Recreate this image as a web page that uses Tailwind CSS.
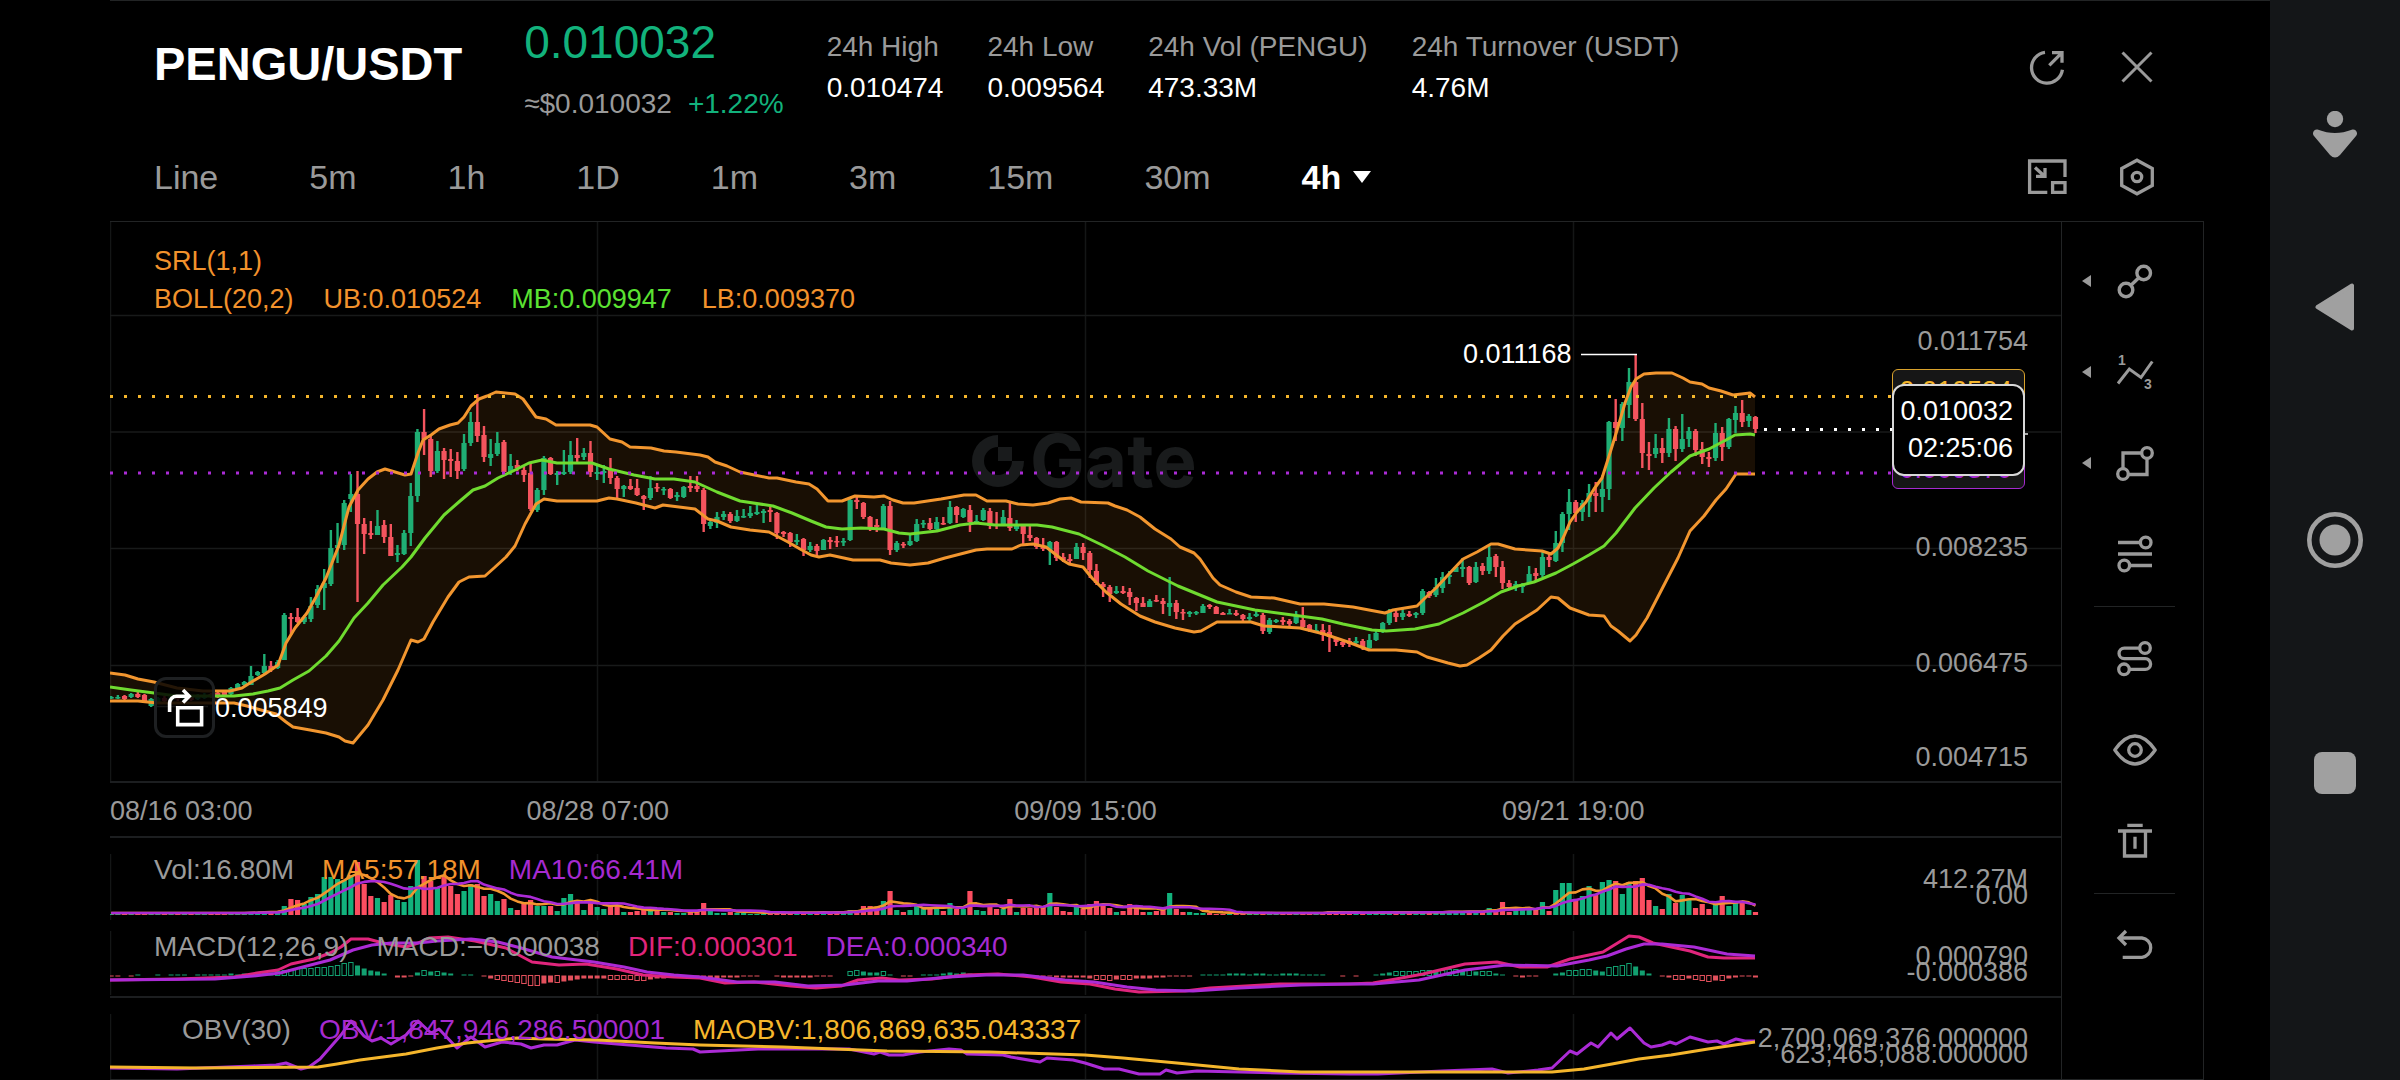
<!DOCTYPE html>
<html lang="en">
<head>
    <meta charset="UTF-8">
    <meta name="viewport" content="width=device-width, initial-scale=1.0">
    <title>PENGU/USDT</title>
    <script src="https://cdn.jsdelivr.net/npm/@tailwindcss/browser@4"></script>
</head>
<body class="flex min-h-screen bg-black pl-[110px] font-['Liberation_Sans',Arial,sans-serif] text-[#9a9a9a] antialiased">
    <div class="flex min-w-0 flex-1 flex-col border-t border-[#222425]">
        <!-- Ticker header -->
        <header class="flex h-[132px] items-center pr-[109px] pl-11">
            <h1 class="pb-1.5 text-[47px] font-bold text-white">PENGU/USDT</h1>
            <div class="ml-[62px]">
                <div class="text-[46px] leading-[74px] text-[#12b27c]">0.010032</div>
                <div class="flex gap-4 text-[28px] leading-[50px]">
                    <span>≈$0.010032</span>
                    <span class="text-[#12b27c]">+1.22%</span>
                </div>
            </div>
            <dl class="ml-[43px] flex gap-11 text-[28px] leading-[41px]">
                <div><dt>24h High</dt><dd class="text-white">0.010474</dd></div>
                <div><dt>24h Low</dt><dd class="text-white">0.009564</dd></div>
                <div><dt>24h Vol (PENGU)</dt><dd class="text-white">473.33M</dd></div>
                <div><dt>24h Turnover (USDT)</dt><dd class="text-white">4.76M</dd></div>
            </dl>
            <div class="ml-auto flex gap-[42px]">
                <button aria-label="Share">
                    <svg class="size-12" viewBox="0 0 48 48" fill="none" stroke="currentColor" stroke-width="3.3">
                        <path d="M22 9.3A15.5 15.5 0 1 0 39.4 26.8M26.3 22.4 38.5 10.2M29 9.7H39V19.7" />
                    </svg>
                </button>
                <button aria-label="Close">
                    <svg class="size-12" viewBox="0 0 48 48" fill="none" stroke="currentColor" stroke-width="3">
                        <path d="M9.5 9.5 38.5 38.5M38.5 9.5 9.5 38.5" />
                    </svg>
                </button>
            </div>
        </header>

        <!-- Interval tabs -->
        <nav class="flex h-[88px] items-center pr-[109px] pl-11">
            <div class="flex gap-[91px] text-[34px]">
                <button>Line</button>
                <button>5m</button>
                <button>1h</button>
                <button>1D</button>
                <button>1m</button>
                <button>3m</button>
                <button>15m</button>
                <button>30m</button>
                <button class="flex items-center gap-3 font-bold text-white">4h
                    <svg class="h-3 w-[18px]" viewBox="0 0 18 12" fill="currentColor"><path d="M0 0H18L9 12Z" /></svg>
                </button>
            </div>
            <div class="ml-auto flex gap-[42px]">
                <button aria-label="Picture in picture">
                    <svg class="size-12" viewBox="0 0 48 48" fill="none" stroke="currentColor" stroke-width="3.3">
                        <path d="M42 24V8H6.6V39.3H24.3M29.6 29.6H42V39.3H29.6ZM12 14.5 21 22.8M22 15V23.3H13" />
                    </svg>
                </button>
                <button aria-label="Chart settings">
                    <svg class="size-12" viewBox="0 0 48 48" fill="none" stroke="currentColor" stroke-width="3.3">
                        <path d="M24 7.2 39.3 15.5V32.5L24 40.8 8.7 32.5V15.5Z" />
                        <circle cx="24" cy="24" r="4.7" />
                    </svg>
                </button>
            </div>
        </nav>

        <div class="mr-[66px] flex flex-1 border-t border-[#222425] text-[27px] leading-[38px]">
            <div class="flex min-w-0 flex-1 flex-col border-b border-[#222425]">
                <!-- Price pane -->
                <section class="relative h-[559px]">
                    <div class="absolute top-[213px] left-[862px] flex items-center gap-1.5 text-[#191b1c]">
                        <svg class="size-[52px]" viewBox="0 0 52 52" fill="currentColor">
                            <path d="M26 0A26 26 0 1 0 52 26H40A14 14 0 1 1 26 12ZM26 12H40V26H26Z" />
                        </svg>
                        <span class="font-[Inter] text-[73px] leading-[52px] font-bold">Gate</span>
                    </div>
                    <svg id="priceChart" class="absolute inset-0 h-full w-full" viewBox="110 222 1951 559" preserveAspectRatio="none" fill="none"></svg>
                    <div class="relative pt-5 pl-11 text-[#f2922c]">
                        <div>SRL(1,1)</div>
                        <div class="flex gap-[30px]">
                            <span>BOLL(20,2)</span>
                            <span>UB:0.010524</span>
                            <span class="text-[#5be232]">MB:0.009947</span>
                            <span>LB:0.009370</span>
                        </div>
                    </div>
                    <span class="absolute top-[113px] left-[1353px] text-white">0.011168</span>
                    <span class="absolute top-[467px] left-[105px] text-white">0.005849</span>
                    <span class="absolute top-[100px] right-[33px]">0.011754</span>
                    <span class="absolute top-[306px] right-[33px]">0.008235</span>
                    <span class="absolute top-[422px] right-[33px]">0.006475</span>
                    <span class="absolute top-[516px] right-[33px]">0.004715</span>

                    <!-- Price tags -->
                    <div class="absolute top-[147px] right-[36px] w-[133px] rounded-md border border-[#d9a22c] bg-[#161616] pt-0.5 pr-3 text-right text-[#f5b62c]">0.010524</div>
                    <div class="absolute top-[225px] right-[36px] w-[133px] rounded-md border border-[#a62ad0] bg-[#161616] pt-0.5 pr-3 text-right text-[#a62ad0]">0.009370</div>
                    <div class="absolute top-[162px] right-[36px] w-[133px] rounded-xl border-2 border-[#d8d8d8] bg-black py-[7px] pr-2.5 text-right leading-[37px] text-white">
                        <div>0.010032</div>
                        <div>02:25:06</div>
                    </div>

                    <button aria-label="Rotate chart" class="absolute top-[455px] left-11 size-[61px] rounded-xl border-3 border-[#1e2022] bg-black/85 text-white">
                        <svg class="size-[55px]" viewBox="3 3 55 55" fill="none" stroke="currentColor" stroke-width="3.6">
                            <path d="M15.6 35V26A7 7 0 0 1 22.6 19.2H34.5M29 13 35.2 19.2 29 25.4M23.7 30.7H47.6V47.6H23.7Z" />
                        </svg>
                    </button>
                </section>

                <!-- Time axis -->
                <div class="grid grid-cols-8 border-y-2 border-[#1c1e20] pt-[11px] pb-[7px] text-center leading-[35px] whitespace-nowrap">
                    <span class="text-left">08/16 03:00</span>
                    <span class="col-span-2">08/28 07:00</span>
                    <span class="col-span-2">09/09 15:00</span>
                    <span class="col-span-2">09/21 19:00</span>
                </div>

                <!-- Volume and MACD pane -->
                <section class="relative h-[158px]">
                    <svg id="volumeChart" class="absolute inset-0 h-full w-full" viewBox="110 838 1951 158" preserveAspectRatio="none" fill="none"></svg>
                    <div class="relative flex gap-7 pt-[13px] pl-11 text-[28px]">
                        <span>Vol:16.80M</span>
                        <span class="text-[#f2922c]">MA5:57.18M</span>
                        <span class="text-[#a62ad0]">MA10:66.41M</span>
                    </div>
                    <div class="relative mt-[39px] flex gap-7 pl-11 text-[28px]">
                        <span>MACD(12,26,9)</span>
                        <span>MACD:−0.000038</span>
                        <span class="text-[#e0257c]">DIF:0.000301</span>
                        <span class="text-[#a62ad0]">DEA:0.000340</span>
                    </div>
                    <span class="absolute top-[22px] right-[33px]">412.27M</span>
                    <span class="absolute top-[38px] right-[33px]">0.00</span>
                    <span class="absolute top-[99px] right-[33px]">0.000790</span>
                    <span class="absolute top-[115px] right-[33px]">-0.000386</span>
                </section>

                <!-- OBV pane -->
                <section class="relative h-[83px] border-t-2 border-[#1c1e20]">
                    <svg id="obvChart" class="absolute inset-0 h-full w-full" viewBox="110 998 1951 81" preserveAspectRatio="none" fill="none"></svg>
                    <div class="relative flex gap-7 pt-[13px] pl-[72px] text-[28px]">
                        <span>OBV(30)</span>
                        <span class="text-[#a62ad0]">OBV:1,847,946,286.500001</span>
                        <span class="text-[#f5b62c]">MAOBV:1,806,869,635.043337</span>
                    </div>
                    <span class="absolute top-[21px] right-[33px]">2,700,069,376.000000</span>
                    <span class="absolute top-[37px] right-[33px]">623,465,088.000000</span>
                </section>
            </div>

            <!-- Drawing tools -->
            <aside class="flex w-[143px] flex-col border-x border-b border-[#222425] pt-[13px]">
                <button aria-label="Lines" class="flex h-[91px] items-center pl-5">
                    <svg class="h-3 w-[9px]" viewBox="0 0 9 12" fill="currentColor"><path d="M9 0V12L0 6Z" /></svg>
                    <svg class="ml-5 size-12" viewBox="0 0 48 48" fill="none" stroke="currentColor" stroke-width="3.4">
                        <circle cx="32.7" cy="16" r="6.8" /><circle cx="15" cy="33" r="6.8" /><path d="M27.8 20.7 20 28.2" />
                    </svg>
                </button>
                <button aria-label="Waves" class="flex h-[91px] items-center pl-5">
                    <svg class="h-3 w-[9px]" viewBox="0 0 9 12" fill="currentColor"><path d="M9 0V12L0 6Z" /></svg>
                    <svg class="ml-5 size-12" viewBox="0 0 48 48" fill="none" stroke="currentColor" stroke-width="3">
                        <path d="M7 35.5 18.3 21 30 29.5 41.3 13.5" />
                        <g fill="currentColor" stroke="none" font-size="14" font-weight="700"><text x="7" y="17">1</text><text x="33" y="41">3</text></g>
                    </svg>
                </button>
                <button aria-label="Shapes" class="flex h-[91px] items-center pl-5">
                    <svg class="h-3 w-[9px]" viewBox="0 0 9 12" fill="currentColor"><path d="M9 0V12L0 6Z" /></svg>
                    <svg class="ml-5 size-12" viewBox="0 0 48 48" fill="none" stroke="currentColor" stroke-width="3.3">
                        <circle cx="36" cy="14" r="5.3" /><circle cx="12" cy="35" r="5.3" />
                        <path d="M30.7 14H12V29.7M36 19.3V35.5H17.3" />
                    </svg>
                </button>
                <button aria-label="Fibonacci" class="flex h-[91px] items-center pl-[49px]">
                    <svg class="size-12" viewBox="0 0 48 48" fill="none" stroke="currentColor" stroke-width="3.3">
                        <circle cx="34.7" cy="12.5" r="5.3" /><circle cx="13.3" cy="35.5" r="5.3" />
                        <path d="M7 12.5H29.4M7 24H41M18.6 35.5H41" />
                    </svg>
                </button>
                <div class="flex h-3.5 items-center justify-center pl-1"><div class="h-px w-[81px] bg-[#222425]"></div></div>
                <button aria-label="Continuous drawing" class="flex h-[91px] items-center pl-[49px]">
                    <svg class="size-12" viewBox="0 0 48 48" fill="none" stroke="currentColor" stroke-width="3.3">
                        <circle cx="34" cy="13" r="5.3" /><circle cx="13" cy="34.3" r="5.3" />
                        <path d="M28.7 13.2H13.3A5.2 5.2 0 0 0 13.3 23.7H34.3A5.2 5.2 0 0 1 34.3 34.3H18.3" />
                    </svg>
                </button>
                <button aria-label="Show drawings" class="flex h-[91px] items-center pl-[49px]">
                    <svg class="size-12" viewBox="0 0 48 48" fill="none" stroke="currentColor" stroke-width="3.3" stroke-linejoin="round">
                        <path d="M3.8 24C9 16.5 16 10 24 10S39 16.5 44.2 24C39 31.5 32 38 24 38S9 31.5 3.8 24Z" />
                        <circle cx="24" cy="24" r="6.3" />
                    </svg>
                </button>
                <button aria-label="Delete drawings" class="flex h-[91px] items-center pl-[49px]">
                    <svg class="size-12" viewBox="0 0 48 48" fill="none" stroke="currentColor" stroke-width="3.3">
                        <path d="M16.3 8.3H31.7M7 14H41M13.5 14V39H34.5V14M24 19.7V31.7" />
                    </svg>
                </button>
                <div class="flex h-3.5 items-center justify-center pl-1"><div class="h-px w-[81px] bg-[#222425]"></div></div>
                <button aria-label="Undo" class="flex h-[91px] items-center pl-[49px]">
                    <svg class="size-12" viewBox="0 0 48 48" fill="none" stroke="currentColor" stroke-width="3.3">
                        <path d="M15 9 8 16 15 23M8 16H31A9.7 9.7 0 0 1 31 35.3H11.7" />
                    </svg>
                </button>
            </aside>
        </div>
    </div>

    <!-- System navigation bar -->
    <nav class="flex w-[130px] flex-col items-center bg-[#141618] text-[#a0a0a0]">
        <button aria-label="Accessibility" class="mt-[111px]">
            <svg class="h-[47px] w-11" viewBox="0 0 44 47" fill="currentColor">
                <circle cx="22" cy="8" r="8.2" />
                <path d="M4.5 18.5Q14 22 22 22T39.5 18.5C43 18 45.5 22 43 25L27 44Q22 49 17 44L1 25C-1.5 22 1 18 4.5 18.5Z" />
            </svg>
        </button>
        <button aria-label="Back" class="mt-[125px]">
            <svg class="h-12 w-10" viewBox="0 0 40 48" fill="currentColor" stroke="currentColor" stroke-width="4" stroke-linejoin="round"><path d="M37 2.5V45.5L2.5 24Z" /></svg>
        </button>
        <button aria-label="Home" class="mt-[181px]">
            <svg class="size-14" viewBox="0 0 56 56"><circle cx="28" cy="28" r="25.7" fill="none" stroke="currentColor" stroke-width="4.6" /><circle cx="28" cy="28" r="15.5" fill="currentColor" /></svg>
        </button>
        <button aria-label="Recent apps" class="mt-[184px] size-[42px] rounded-lg bg-[#a0a0a0]"></button>
    </nav>

    <script>
        const GREEN = '#1fae74', RED = '#f4545e', ORANGE = '#f2962f', LIME = '#6fdb30', PURPLE = '#ab2bd6', PINK = '#e0257c', YELLOW = '#f5b62c';
        const STEP = 6.657;
        const xAt = i => 111.2 + i * STEP;

        // each candle: direction, high, body top, body bottom, low
        const candles = `g 696 697 698 699,g 695 697 698 699,r 695 696 699 700,g 693 694 697 698,r 692 694 697 698,r 694 695 701 701,g 698 699 706 707,
g 697 698 702 704,r 696 698 701 702,g 695 697 700 701,r 695 697 699 701,g 694 696 699 700,r 695 697 700 701,g 694 696 699 700,g 693 695 698 699,r 693 694 697 698,r 692 693 697 698,r 690 692 696 697,
g 687 688 694 695,g 683 684 690 690,g 681 682 685 686,g 666 676 685 685,g 671 672 675 676,g 654 666 673 674,r 661 666 670 672,g 660 662 668 669,g 613 615 660 660,
r 613 617 619 635,r 608 617 622 623,g 615 617 622 624,g 597 606 619 622,g 585 589 605 608,g 569 583 588 610,g 530 548 584 586,g 523 545 548 563,g 500 503 545 550,g 474 494 499 512,
r 471 494 524 602,r 518 524 534 554,r 521 533 535 539,g 510 526 535 535,r 520 525 537 543,r 524 537 556 556,g 545 553 555 562,g 530 533 554 555,g 483 496 533 546,g 429 432 496 502,
r 409 432 439 455,r 436 439 471 477,g 441 451 471 473,r 448 451 460 479,r 449 459 461 477,r 452 461 471 479,g 434 443 469 471,g 412 422 443 446,r 394 422 436 442,r 426 435 457 462,
g 439 454 458 466,g 432 443 454 456,r 440 442 472 473,g 454 466 472 475,r 460 465 468 471,r 466 470 475 482,r 463 473 509 511,g 488 490 510 512,g 456 458 490 495,r 457 458 474 475,
g 471 473 475 485,g 450 472 474 475,g 441 455 472 474,r 438 455 458 463,g 448 453 457 460,r 441 453 472 477,g 465 472 474 480,g 465 471 473 483,r 458 469 478 484,r 476 478 489 499,
g 485 486 489 497,r 479 486 489 490,r 479 488 495 496,r 495 496 499 510,g 476 488 498 500,r 483 487 488 492,g 487 489 490 495,r 488 489 498 499,g 492 495 497 501,g 486 487 497 498,
r 476 486 488 492,r 476 486 489 492,r 488 490 524 532,g 520 522 526 529,g 512 517 523 528,g 511 514 517 520,r 512 514 521 523,g 510 516 521 522,g 509 516 517 518,g 506 513 516 518,
g 504 512 514 515,g 509 511 513 523,r 507 510 512 522,r 512 513 533 539,r 531 532 534 537,r 532 533 542 547,g 534 540 542 545,r 538 539 550 556,g 542 546 550 552,r 544 546 551 556,
g 539 540 550 550,r 537 540 542 549,r 536 541 542 547,g 538 541 542 546,g 498 500 540 541,r 497 500 502 509,r 502 503 517 519,r 516 517 527 531,r 519 525 527 532,g 504 506 528 529,
r 501 506 550 555,g 541 543 550 552,r 542 544 545 548,g 534 541 545 546,g 519 524 541 542,g 520 523 524 528,r 518 523 529 530,g 517 522 529 530,r 517 523 524 525,g 501 507 523 524,
r 506 507 515 523,g 508 509 517 518,r 505 510 522 532,g 515 521 522 523,g 508 510 520 521,r 508 511 526 529,r 512 524 526 529,g 510 517 525 526,r 503 518 528 531,g 520 525 529 531,
r 524 526 534 544,r 525 535 538 541,r 537 538 547 549,r 538 547 549 551,g 541 542 550 565,r 541 542 558 561,r 553 557 560 562,r 554 559 561 563,g 543 547 559 559,r 543 547 553 560,
r 551 553 570 578,r 564 571 583 585,r 582 584 587 597,r 585 587 594 602,g 586 591 593 594,r 586 591 593 594,r 588 592 597 605,r 597 598 603 611,r 597 603 607 607,g 599 601 607 607,
r 595 600 601 602,r 598 601 604 614,g 577 603 607 616,r 600 603 612 619,r 609 612 613 620,g 611 612 614 617,g 611 612 613 615,g 604 606 613 613,r 604 605 607 609,r 606 607 614 614,
r 612 613 615 615,g 609 613 614 614,r 610 613 615 616,r 614 615 619 622,g 613 617 619 621,g 611 614 616 617,r 613 615 631 634,g 618 620 632 634,g 619 620 622 623,r 617 620 622 625,
r 619 621 624 627,g 611 615 623 624,r 607 620 627 628,r 624 625 631 632,g 624 630 632 633,r 624 630 635 641,r 625 632 637 652,r 637 638 642 646,r 640 642 645 647,r 638 641 644 647,
g 637 641 643 646,r 639 641 648 650,g 634 640 648 649,g 631 633 640 641,g 622 623 632 633,g 609 612 623 625,r 611 613 617 622,g 609 613 617 620,r 611 614 616 617,g 612 613 615 618,
g 589 591 613 615,r 591 592 596 598,g 578 587 595 597,g 572 577 588 593,g 571 575 577 584,g 567 567 572 572,g 558 567 569 577,r 566 567 583 585,g 562 567 582 583,r 563 566 571 575,
g 544 557 571 574,r 554 556 567 577,r 561 567 583 589,r 580 583 587 588,g 581 584 586 591,g 583 584 587 593,g 566 574 583 584,r 568 573 576 580,g 552 557 575 577,r 554 557 560 567,
g 531 543 561 562,g 512 514 543 552,g 489 502 514 530,r 500 502 513 522,g 500 503 512 521,g 484 493 502 517,r 482 493 496 512,g 475 489 497 512,g 421 422 489 500,r 399 422 428 441,
g 402 404 428 441,g 368 382 405 418,r 354 382 419 421,r 403 419 453 468,r 442 454 456 470,g 434 448 454 458,r 438 448 453 463,g 418 429 453 457,r 426 429 449 461,g 414 439 449 452,
g 427 431 439 447,r 429 431 450 456,r 442 449 457 464,r 452 457 459 467,g 423 433 458 461,r 427 433 447 461,g 418 419 447 449,g 406 413 420 433,r 400 413 422 427,g 414 416 421 427,
r 416 417 429 433`.split(',').map(row => {
            const [dir, ...v] = row.trim().split(' ');
            return { up: dir === 'g', high: +v[0], top: +v[1], bottom: +v[2], low: +v[3] };
        });

        const volume = [1,1,1,1,1,1,1,1,1,1,1,1,1,1,1,1,1,1,1,1,1,2,2,3,2,2,9,16,15,11,18,21,38,38,36,35,40,53,31,19,17,13,20,15,13,29,55,39,34,27,39,29,21,24,31,31,19,21,14,16,
            7,5,12,15,9,9,9,4,17,21,15,5,12,8,6,9,9,3,3,4,5,4,5,3,3,2,2,3,3,12,4,2,2,3,2,2,1,1,1,1,2,1,1,2,1,2,1,2,1,2,2,5,3,9,9,7,14,24,5,3,
            5,9,6,6,6,4,12,6,6,24,5,4,8,6,6,16,3,7,7,8,7,22,8,4,3,8,6,11,14,9,7,3,4,11,7,3,3,4,5,22,6,3,3,2,2,2,1,1,1,1,1,1,1,1,1,1,1,1,1,1,
            1,1,1,4,1,2,1,1,1,1,2,2,2,1,2,2,1,2,2,2,2,3,2,2,3,2,3,7,3,13,3,5,5,5,5,13,4,25,32,32,15,19,29,21,33,35,34,21,33,34,37,15,9,6,21,12,20,15,7,11,
            6,10,19,9,12,13,5,3];

        const macd = [-1,-1,0,-1,1,0,0,1,0,1,1,1,0,1,1,1,1,1,2,1,2,2,2,3,3,4,5,6,7,7,7,8,8,9,10,12,13,10,7,5,4,2,0,-2,-2,-1,3,5,4,4,3,2,0,1,1,0,-1,-3,-4,-5,
            -6,-7,-8,-10,-10,-8,-7,-7,-6,-5,-4,-3,-3,-3,-3,-4,-4,-4,-4,-5,-5,-4,-3,-3,-2,-2,-2,-2,-2,-2,-3,-3,-2,-2,-2,-1,-1,-1,0,0,-1,-2,-2,-2,-2,-2,-1,-1,-1,0,0,4,5,4,3,3,4,1,0,-1,
            -1,0,1,1,1,2,3,2,3,2,1,1,1,1,1,0,0,-1,-1,-1,-1,-1,-2,-2,-2,-2,-2,-3,-4,-4,-5,-4,-4,-4,-3,-3,-3,-2,-2,-1,-1,-1,-1,0,1,1,1,1,2,2,2,1,2,2,1,1,2,2,2,1,
            1,1,1,0,0,-1,0,-1,0,0,1,2,3,4,4,4,4,5,5,4,5,6,6,5,5,4,4,4,2,1,0,-1,-2,-1,-1,0,0,2,3,5,5,6,6,5,4,8,9,10,12,9,5,2,0,-1,-2,-4,-4,-3,-4,-5,
            -6,-5,-5,-3,-2,-1,-1,-2];

        const bollUpper = '110,673 125,675 138,679 154,682 177,688 203,691 230,691 242,688 253,681 265,674 278,665 286,643 295,628 307,613 316,597 326,578 339,545 349,507 358,490 368,479 377,472 385,469 395,472 405,475 411,474 418,453 423,440 431,435 439,429 450,425 458,423 464,417 471,406 479,399 487,396 496,392 515,394 523,399 536,417 546,419 556,425 590,425 597,427 610,439 622,442 630,447 651,448 664,451 676,452 700,455 708,457 715,462 727,466 740,472 769,478 777,478 796,482 809,484 817,489 828,501 842,501 855,496 874,497 884,496 893,500 903,503 914,503 941,499 964,495 976,495 987,501 1006,501 1018,504 1033,505 1048,503 1060,499 1071,498 1081,502 1108,503 1115,506 1127,510 1140,517 1155,529 1171,539 1180,547 1194,553 1200,559 1213,578 1220,585 1236,592 1251,597 1274,598 1300,604 1324,604 1353,607 1385,613 1393,610 1417,606 1425,598 1436,588 1448,575 1463,559 1477,552 1491,544 1498,544 1515,549 1542,551 1551,554 1558,548 1564,536 1570,522 1577,512 1586,502 1594,489 1602,478 1610,453 1618,427 1625,403 1631,387 1636,379 1644,374 1656,373 1672,373 1683,378 1690,382 1702,384 1709,388 1721,391 1733,395 1750,393 1755,397';
        const bollMiddle = '110,687 131,690 154,693 177,696 203,696 234,696 253,694 268,691 280,688 293,680 309,671 326,656 339,641 354,618 368,603 383,585 402,567 411,557 425,538 444,515 460,501 473,490 485,486 498,478 513,471 529,463 542,460 557,463 592,463 609,469 634,475 655,479 674,479 695,482 717,492 740,501 773,506 792,513 811,521 826,527 842,529 861,528 884,529 899,533 910,534 937,531 960,525 976,523 995,525 1037,525 1052,527 1079,534 1102,545 1125,557 1148,571 1178,586 1217,602 1255,610 1300,616 1322,619 1343,624 1372,630 1386,631 1415,629 1439,624 1463,613 1484,602 1501,592 1518,586 1534,582 1556,573 1573,564 1589,555 1604,546 1616,533 1635,508 1654,488 1671,472 1690,456 1709,449 1726,440 1735,435 1750,434 1755,435';
        const bollLower = '110,701 138,701 157,703 234,703 247,706 261,710 276,714 286,722 293,727 310,730 326,733 339,737 345,741 353,743 358,737 368,725 383,700 398,670 411,640 418,642 424,639 433,622 448,597 459,582 469,577 485,576 494,568 506,557 515,546 525,524 536,504 544,499 557,501 597,501 609,498 617,499 636,503 655,508 663,505 695,509 708,519 717,521 731,527 750,530 769,532 788,542 800,549 811,555 819,557 830,555 853,560 880,560 891,563 910,565 928,563 945,558 976,550 987,549 1012,549 1021,545 1033,544 1046,547 1064,561 1069,564 1083,567 1092,578 1106,592 1121,604 1140,616 1155,622 1175,628 1194,632 1201,631 1217,622 1251,622 1264,626 1300,628 1324,634 1348,642 1369,650 1396,650 1417,652 1427,657 1448,663 1460,666 1467,665 1479,658 1491,650 1503,636 1515,624 1537,610 1551,597 1558,598 1570,608 1589,615 1604,616 1611,626 1618,631 1630,641 1636,635 1647,618 1663,587 1678,558 1690,531 1704,516 1716,500 1726,489 1736,474 1755,474';
        const dif = '110,980 177,979 234,977 257,973 278,970 291,964 314,959 330,953 341,947 351,939 368,939 383,943 406,947 418,943 429,938 448,937 475,941 506,948 517,954 532,962 559,965 586,964 617,969 643,975 674,977 700,978 725,983 754,982 791,986 816,988 841,986 858,980 882,978 899,980 932,979 965,975 998,974 1032,977 1061,982 1090,984 1115,989 1139,992 1185,991 1210,988 1280,984 1350,984 1373,983 1396,979 1423,974 1465,964 1497,962 1520,967 1547,967 1570,959 1589,955 1603,952 1616,944 1629,936 1639,937 1653,943 1676,948 1690,951 1708,957 1724,958 1755,958';
        const dea = '110,980 215,979 253,976 280,973 299,968 330,960 353,950 372,945 391,943 418,943 437,941 471,939 498,942 521,948 552,957 594,962 624,967 647,972 674,975 700,977 737,982 775,982 808,986 845,985 878,981 907,981 949,977 986,975 1023,975 1065,980 1094,982 1127,987 1156,990 1193,991 1239,988 1301,985 1350,984 1373,984 1419,980 1465,970 1506,965 1557,966 1589,960 1607,956 1626,949 1644,944 1662,944 1694,947 1727,954 1755,956';
        const obv = '110,1068 177,1069 253,1066 276,1065 286,1063 301,1069 309,1067 320,1059 341,1035 351,1021 364,1036 372,1041 381,1038 391,1044 406,1035 418,1021 431,1033 439,1029 457,1048 471,1037 485,1047 502,1042 521,1044 531,1048 544,1045 557,1045 575,1040 594,1042 617,1044 666,1048 693,1049 700,1052 758,1049 849,1049 874,1054 880,1052 889,1055 903,1055 920,1052 949,1049 961,1050 967,1054 1003,1055 1011,1057 1040,1062 1047,1058 1073,1060 1085,1063 1104,1069 1119,1069 1139,1074 1160,1074 1166,1070 1177,1073 1197,1071 1280,1073 1350,1074 1378,1074 1442,1071 1492,1069 1508,1073 1538,1070 1552,1068 1570,1051 1577,1054 1591,1043 1598,1047 1611,1033 1617,1039 1630,1028 1644,1043 1651,1047 1662,1045 1670,1042 1676,1044 1690,1037 1708,1042 1717,1041 1724,1044 1736,1039 1745,1041 1755,1041';
        const maObv = '110,1067 196,1068 318,1067 337,1064 360,1060 406,1054 437,1048 467,1043 517,1038 544,1039 597,1040 655,1043 700,1045 783,1047 887,1051 990,1052 1085,1055 1123,1058 1177,1063 1239,1069 1301,1072 1350,1072 1511,1072 1552,1072 1584,1069 1612,1064 1639,1059 1671,1055 1708,1049 1755,1042';

        const path = (d, stroke, width) => `<path d="${d}" stroke="${stroke}" stroke-width="${width}" />`;
        const line = (points, stroke, width = 3) => `<polyline points="${points}" stroke="${stroke}" stroke-width="${width}" stroke-linejoin="round" />`;
        const dotted = (x1, x2, y, stroke) => `<path d="M${x1} ${y}H${x2}" stroke="${stroke}" stroke-width="3" stroke-dasharray="3 11" />`;
        const columns = (y1, y2) => path([110.5, 597.5, 1085.5, 1573.5].map(x => `M${x} ${y1}V${y2}`).join(''), '#141616', 1.5);

        function movingAverage(values, size) {
            return values.map((_, i) => {
                const part = values.slice(Math.max(0, i - size + 1), i + 1);
                return part.reduce((a, b) => a + b, 0) / part.length;
            });
        }

        function drawPrice() {
            let out = columns(222, 781) + path('M110 315.5H2061M110 432H2061M110 548.5H2061M110 665.5H2061', '#181a1a', 1.5);
            const area = bollUpper + ' ' + bollLower.split(' ').reverse().join(' ');
            out += `<polygon points="${area}" fill="#f2922c" fill-opacity="0.1" />`;
            candles.forEach((c, i) => {
                const x = xAt(i), color = c.up ? GREEN : RED;
                out += path(`M${x} ${c.high}V${c.low}`, color, 2.4);
                out += `<rect x="${x - 2.6}" y="${c.top}" width="5.2" height="${Math.max(1.5, c.bottom - c.top)}" fill="${color}" />`;
            });
            out += line(bollUpper, ORANGE) + line(bollLower, ORANGE) + line(bollMiddle, LIME);
            out += dotted(110, 1892, 396.5, YELLOW) + dotted(110, 1892, 473, PURPLE) + dotted(1764, 1892, 429.5, '#fff');
            out += path('M1581 354.5H1637', '#fff', 1.5) + path('M154 706.5H208', '#999', 1.5) + path('M2024 434H2028', '#aaa', 2);
            document.getElementById('priceChart').innerHTML = out;
        }

        function drawVolume() {
            let out = columns(854, 920) + columns(931, 995);
            volume.forEach((v, i) => {
                out += `<rect x="${xAt(i) - 2.6}" y="${915 - v}" width="5.2" height="${v}" fill="${candles[i].up ? '#12b27c' : '#fb4d60'}" />`;
            });
            const toPoints = values => values.map((v, i) => `${xAt(i)},${914 - v}`).join(' ');
            out += line(toPoints(movingAverage(volume, 5)), ORANGE, 2.6) + line(toPoints(movingAverage(volume, 10)), PURPLE, 2.6);
            macd.forEach((v, i) => {
                if (!v) return;
                const color = v > 0 ? '#12a070' : '#e2505c', h = Math.abs(v);
                const y = v > 0 ? 975.5 - h : 975.5;
                // growing bars are hollow
                const hollow = h > 3 && h >= Math.abs(macd[i - 1] || 0);
                out += hollow
                    ? `<rect x="${xAt(i) - 2.2}" y="${y}" width="4.4" height="${h}" stroke="${color}" />`
                    : `<rect x="${xAt(i) - 2.5}" y="${y}" width="5" height="${h}" fill="${color}" />`;
            });
            out += line(dif, PINK) + line(dea, PURPLE);
            document.getElementById('volumeChart').innerHTML = out;
        }

        function drawObv() {
            document.getElementById('obvChart').innerHTML = columns(1014, 1079) + line(obv, PURPLE) + line(maObv, YELLOW);
        }

        drawPrice();
        drawVolume();
        drawObv();
    </script>
</body>
</html>
